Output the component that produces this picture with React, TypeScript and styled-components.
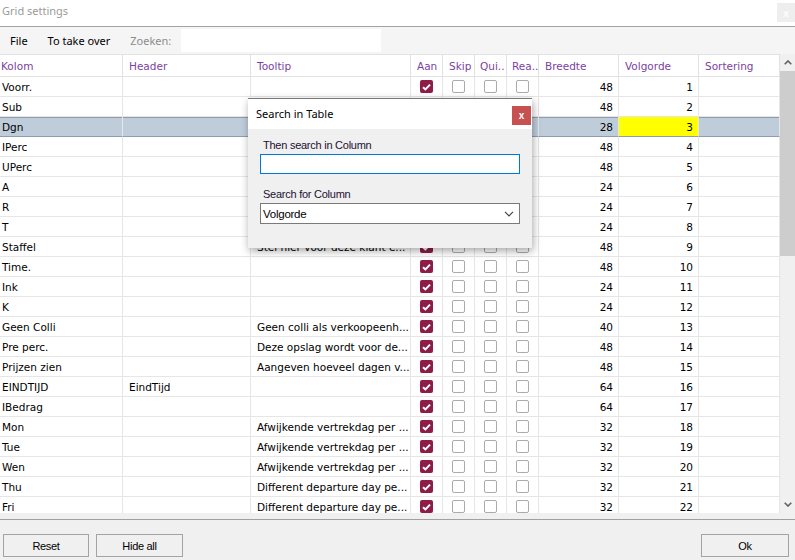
import React from 'react';
import styled, { createGlobalStyle, css } from 'styled-components';

const Global = createGlobalStyle`
  html, body { margin: 0; padding: 0; }
  body { width: 795px; height: 560px; overflow: hidden; background: #fff; }
  * { box-sizing: border-box; }
`;

const Window = styled.div`
  width: 795px;
  height: 560px;
  display: flex;
  flex-direction: column;
  background: #f0f0f0;
`;

const TitleBar = styled.div`
  flex: none;
  height: 27px;
  background: #fff;
  border-bottom: 1px solid #a3a3a3;
  display: flex;
  justify-content: space-between;
  align-items: flex-start;
  padding-left: 2px;
`;

const Title = styled.span`
  font-family: "Noto Sans", sans-serif;
  font-size: 11px;
  line-height: 22px;
  color: #9b9b9b;
`;

const TitleClose = styled.div`
  width: 18px;
  height: 19px;
  margin-top: 3px;
  background: #eeeeee;
  color: #fdfdfd;
  font-family: "Liberation Sans", sans-serif;
  font-size: 11px;
  font-weight: bold;
  display: flex;
  align-items: center;
  justify-content: center;
`;

const MenuBar = styled.div`
  flex: none;
  height: 27px;
  background: #f5f5f5;
  display: flex;
  align-items: center;
  font-family: "Noto Sans", sans-serif;
  font-size: 11px;
`;

const MenuItem = styled.span<{ $muted?: boolean }>`
  padding: 0 10px;
  color: ${p => (p.$muted ? '#8c8c8c' : '#000')};
  line-height: 27px;
`;

const SearchBox = styled.div`
  width: 200px;
  height: 23px;
  background: #fff;
`;

const GridArea = styled.div`
  flex: none;
  height: 459px;
  display: flex;
  position: relative;
  background: #fff;
  overflow: hidden;
`;

const Table = styled.div`
  width: 780px;
  flex: none;
  overflow: hidden;
  font-family: "DejaVu Sans", sans-serif;
  font-size: 10.5px;
`;

const COLS = '123px 128px 160px 32px 32px 32px 32px 80px 80px 81px';

const HeaderRow = styled.div`
  display: grid;
  grid-template-columns: ${COLS};
  height: 23px;
  border-top: 1px solid #e2e2e2;
  border-bottom: 1px solid #e2e2e2;
`;

const HeaderCell = styled.div<{ $first?: boolean; $tight?: boolean }>`
  border-right: 1px solid #e2e2e2;
  color: #7b3fa3;
  line-height: 21px;
  padding-top: 1px;
  white-space: nowrap;
  overflow: hidden;
  padding-left: ${p => (p.$first ? '1px' : p.$tight ? '5px' : '6px')};
`;

const Row = styled.div<{ $selected?: boolean }>`
  display: grid;
  grid-template-columns: ${COLS};
  height: 20px;
  ${p =>
    p.$selected &&
    css`
      background: #bfcddb;
      box-shadow: inset 0 1px 0 #8e9cab;
    `}
`;

const Cell = styled.div<{ $align?: 'left' | 'right' | 'center'; $first?: boolean; $highlight?: boolean; $selected?: boolean }>`
  border-right: 1px solid #e6e6e6;
  border-bottom: 1px solid ${p => (p.$selected ? '#8e9cab' : '#e6e6e6')};
  line-height: 19px;
  white-space: nowrap;
  overflow: hidden;
  color: #000;
  display: flex;
  align-items: center;
  justify-content: ${p => (p.$align === 'right' ? 'flex-end' : p.$align === 'center' ? 'center' : 'flex-start')};
  padding: ${p => (p.$align === 'center' ? '0' : '1px')} ${p => (p.$align === 'right' ? '5px' : '0')} 0
    ${p => (p.$first ? '2px' : p.$align ? '0' : '6px')};
  background: ${p => (p.$highlight ? '#ffff00' : 'transparent')};
`;

const Check = styled.span<{ $checked: boolean }>`
  width: 13px;
  height: 13px;
  border-radius: 2px;
  display: flex;
  align-items: center;
  justify-content: center;
  ${p =>
    p.$checked
      ? css`
          background: #8d1c47;
        `
      : css`
          background: #fff;
          border: 1px solid #ababab;
        `}
`;

const ScrollBar = styled.div`
  width: 15px;
  flex: none;
  background: #f0f0f0;
  display: flex;
  flex-direction: column;
`;

const ScrollArrow = styled.div`
  height: 17px;
  flex: none;
  display: flex;
  align-items: center;
  justify-content: center;
`;

const Thumb = styled.div`
  height: 185px;
  flex: none;
  background: #cdcdcd;
`;

const Track = styled.div`
  flex: 1;
`;

const Dialog = styled.div`
  position: absolute;
  left: 248px;
  top: 44px;
  width: 284px;
  height: 150px;
  display: flex;
  flex-direction: column;
  border-top: 1px solid #7a7a7a;
  box-shadow: 1px 3px 8px rgba(0, 0, 0, 0.35);
  background: #f0f0f0;
`;

const DialogHead = styled.div`
  height: 30px;
  flex: none;
  background: #fff;
  display: flex;
  align-items: flex-start;
  justify-content: space-between;
  padding-left: 8px;
`;

const DialogTitle = styled.span`
  font-family: "Noto Sans", sans-serif;
  font-size: 11px;
  line-height: 29px;
  color: #000;
`;

const DialogClose = styled.div`
  width: 19px;
  height: 19px;
  margin-top: 7px;
  margin-right: 1px;
  background: #c75050;
  color: #fff;
  font-family: "Liberation Sans", sans-serif;
  font-weight: bold;
  font-size: 10px;
  display: flex;
  align-items: center;
  justify-content: center;
`;

const DialogBody = styled.div`
  flex: 1;
  padding: 9px 12px 0 12px;
  display: flex;
  flex-direction: column;
  font-family: "Liberation Sans", sans-serif;
  font-size: 11px;
  letter-spacing: -0.25px;
`;

const Label = styled.div<{ $gap?: boolean }>`
  height: 14px;
  line-height: 14px;
  padding-left: 3px;
  margin-bottom: 2px;
  margin-top: ${p => (p.$gap ? '13px' : '0')};
  color: #1c0f33;
`;

const TextInput = styled.div`
  height: 20px;
  background: #fff;
  border: 1px solid #0078d7;
`;

const Select = styled.div`
  height: 21px;
  background: #fff;
  border: 1px solid #7a7a7a;
  display: flex;
  align-items: center;
  justify-content: space-between;
  padding: 0 5px 0 2px;
  font-size: 11.5px;
  color: #000;
`;

const Footer = styled.div`
  flex: none;
  margin-top: 6px;
  height: 41px;
  border-top: 1px solid #a0a0a0;
  display: flex;
  align-items: flex-end;
  gap: 7px;
  padding: 0 6px 3px 3px;
`;

const Button = styled.div<{ $w: number; $push?: boolean }>`
  width: ${p => p.$w}px;
  height: 23px;
  border: 1px solid #a3a3a3;
  background: #f0f0f0;
  display: flex;
  align-items: center;
  justify-content: center;
  font-family: "Liberation Sans", sans-serif;
  font-size: 11px;
  letter-spacing: -0.3px;
  color: #000;
  margin-left: ${p => (p.$push ? 'auto' : '0')};
`;

const CheckMark = () => (
  <svg width="9" height="8" viewBox="0 0 9 8">
    <path d="M1 4.2 L3.4 6.4 L8 1.6" fill="none" stroke="#fff" strokeWidth="2" />
  </svg>
);

const Chevron = ({ up, color = '#606060', w = 8, h = 5 }: { up?: boolean; color?: string; w?: number; h?: number }) => (
  <svg width={w} height={h} viewBox="0 0 8 5">
    <path
      d={up ? 'M0.7 4.3 L4 1 L7.3 4.3' : 'M0.7 0.7 L4 4 L7.3 0.7'}
      fill="none"
      stroke={color}
      strokeWidth={up || color === '#606060' ? 1.6 : 1}
    />
  </svg>
);

type Data = [string, string, string, number, number];

const rows: Data[] = [
  ['Voorr.', '', '', 48, 1],
  ['Sub', '', '', 48, 2],
  ['Dgn', '', '', 28, 3],
  ['IPerc', '', '', 48, 4],
  ['UPerc', '', '', 48, 5],
  ['A', '', '', 24, 6],
  ['R', '', '', 24, 7],
  ['T', '', '', 24, 8],
  ['Staffel', '', 'Stel hier voor deze klant e...', 48, 9],
  ['Time.', '', '', 48, 10],
  ['Ink', '', '', 24, 11],
  ['K', '', '', 24, 12],
  ['Geen Colli', '', 'Geen colli als verkoopeenh...', 40, 13],
  ['Pre perc.', '', 'Deze opslag wordt voor de...', 48, 14],
  ['Prijzen zien', '', 'Aangeven hoeveel dagen v...', 48, 15],
  ['EINDTIJD', 'EindTijd', '', 64, 16],
  ['IBedrag', '', '', 64, 17],
  ['Mon', '', 'Afwijkende vertrekdag per ...', 32, 18],
  ['Tue', '', 'Afwijkende vertrekdag per ...', 32, 19],
  ['Wen', '', 'Afwijkende vertrekdag per ...', 32, 20],
  ['Thu', '', 'Different departure day pe...', 32, 21],
  ['Fri', '', 'Different departure day pe...', 32, 22],
];

const headers = ['Kolom', 'Header', 'Tooltip', 'Aan', 'Skip', 'Qui..', 'Rea..', 'Breedte', 'Volgorde', 'Sortering'];

export default function App() {
  return (
    <Window>
      <Global />
      <TitleBar>
        <Title>Grid settings</Title>
        <TitleClose>x</TitleClose>
      </TitleBar>
      <MenuBar>
        <MenuItem>File</MenuItem>
        <MenuItem>To take over</MenuItem>
        <MenuItem $muted>Zoeken:</MenuItem>
        <SearchBox />
      </MenuBar>
      <GridArea>
        <Table>
          <HeaderRow>
            {headers.map((h, i) => (
              <HeaderCell key={h} $first={i === 0} $tight={i === 5 || i === 6}>
                {h}
              </HeaderCell>
            ))}
          </HeaderRow>
          {rows.map(([kolom, header, tip, breedte, volg], idx) => {
            const sel = idx === 2;
            return (
              <Row key={kolom} $selected={sel}>
                <Cell $first $selected={sel}>{kolom}</Cell>
                <Cell $selected={sel}>{header}</Cell>
                <Cell $selected={sel}>{tip}</Cell>
                <Cell $align="center" $selected={sel}>
                  <Check $checked>
                    <CheckMark />
                  </Check>
                </Cell>
                <Cell $align="center" $selected={sel}>
                  <Check $checked={false} />
                </Cell>
                <Cell $align="center" $selected={sel}>
                  <Check $checked={false} />
                </Cell>
                <Cell $align="center" $selected={sel}>
                  <Check $checked={false} />
                </Cell>
                <Cell $align="right" $selected={sel}>{breedte}</Cell>
                <Cell $align="right" $selected={sel} $highlight={sel}>{volg}</Cell>
                <Cell $selected={sel} />
              </Row>
            );
          })}
        </Table>
        <ScrollBar>
          <ScrollArrow>
            <Chevron up />
          </ScrollArrow>
          <Thumb />
          <Track />
          <ScrollArrow>
            <Chevron />
          </ScrollArrow>
        </ScrollBar>
        <Dialog>
          <DialogHead>
            <DialogTitle>Search in Table</DialogTitle>
            <DialogClose>x</DialogClose>
          </DialogHead>
          <DialogBody>
            <Label>Then search in Column</Label>
            <TextInput />
            <Label $gap>Search for Column</Label>
            <Select>
              <span>Volgorde</span>
              <Chevron color="#444" w={10} h={6} />
            </Select>
          </DialogBody>
        </Dialog>
      </GridArea>
      <Footer>
        <Button $w={86}>Reset</Button>
        <Button $w={87}>Hide all</Button>
        <Button $w={88} $push>Ok</Button>
      </Footer>
    </Window>
  );
}
